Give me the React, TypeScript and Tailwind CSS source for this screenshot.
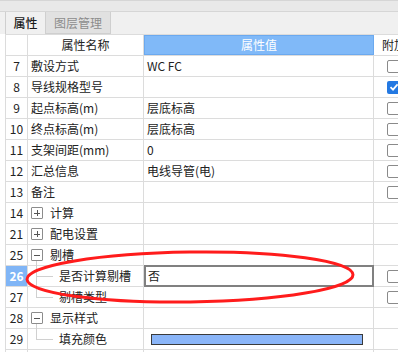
import React from "react";

type Row = {
  no: string;
  name: string;
  value?: string;
  check?: boolean | null; // null = no checkbox
  expand?: "+" | "-";
  child?: "mid" | "last";
  selected?: boolean;
  color?: boolean;
};

const rows: Row[] = [
  { no: "7", name: "敷设方式", value: "WC FC", check: false },
  { no: "8", name: "导线规格型号", check: true },
  { no: "9", name: "起点标高(m)", value: "层底标高", check: false },
  { no: "10", name: "终点标高(m)", value: "层底标高", check: false },
  { no: "11", name: "支架间距(mm)", value: "0", check: false },
  { no: "12", name: "汇总信息", value: "电线导管(电)", check: false },
  { no: "13", name: "备注", check: false },
  { no: "14", name: "计算", expand: "+", check: null },
  { no: "21", name: "配电设置", expand: "+", check: null },
  { no: "25", name: "剔槽", expand: "-", check: null },
  { no: "26", name: "是否计算剔槽", value: "否", child: "mid", selected: true, check: false },
  { no: "27", name: "剔槽类型", child: "last", check: false },
  { no: "28", name: "显示样式", expand: "-", check: null },
  { no: "29", name: "填充颜色", child: "last", color: true, check: null },
];

function CheckBox({ checked }: { checked: boolean }) {
  if (checked) {
    return (
      <span className="flex h-[13px] w-[13px] shrink-0 items-center justify-center rounded-[2px] bg-[#2479e2]">
        <svg width="10" height="10" viewBox="0 0 10 10">
          <path d="M1.5 5.2 L4 7.6 L8.6 2.4" fill="none" stroke="#fff" strokeWidth="1.8" />
        </svg>
      </span>
    );
  }
  return <span className="h-[13px] w-[13px] shrink-0 rounded-[2px] border border-[#8a8a8a] bg-white" />;
}

function ExpandBox({ sign }: { sign: "+" | "-" }) {
  return (
    <span className="relative flex h-[12px] w-[12px] shrink-0 items-center justify-center rounded-[1px] border border-[#8c8c8c] bg-white">
      <span className="absolute h-px w-[6px] bg-[#555]" />
      {sign === "+" && <span className="absolute h-[6px] w-px bg-[#555]" />}
    </span>
  );
}

export default function App() {
  return (
    <div
      className="relative h-[352px] w-[398px] overflow-hidden bg-white text-[12px] text-[#222]"
      style={{ fontFamily: '"Noto Sans CJK SC", "Noto Sans", sans-serif' }}
    >
      {/* top strip */}
      <div className="h-[12px] border-y border-[#d6d6d6] bg-[#e9e9e9]" />

      {/* tabs */}
      <div className="flex h-[22px] bg-[#f0f0f0] pl-[5px]">
        <div className="flex w-[41px] items-center justify-center border-x border-[#cfcfcf] font-medium text-[#1a1a1a]">
          属性
        </div>
        <div className="flex w-[65px] items-center justify-center border-r border-b border-[#cfcfcf] bg-[#e1e1e1] text-[#8c8c8c]">
          图层管理
        </div>
      </div>

      {/* table */}
      <div className="pl-[5px]">
        <div className="flex h-[22px] border-y border-[#dcdcdc]">
          <div className="w-[23px] shrink-0 border-x border-[#dcdcdc]" />
          <div className="flex w-[116px] shrink-0 items-center justify-center border-r border-[#dcdcdc]">属性名称</div>
          <div className="flex w-[230px] shrink-0 items-center justify-center border border-[#6ba9ef] bg-[#80b9f8] text-white">
            属性值
          </div>
          <div className="flex items-center pl-[8px] whitespace-nowrap">附加</div>
        </div>

        {rows.map((r) => (
          <div key={r.no} className="flex h-[21px] border-b border-[#dcdcdc]">
            <div
              className={
                r.selected
                  ? "flex w-[23px] shrink-0 items-center justify-center border-x border-[#dcdcdc] bg-[#80b5f6] font-bold text-white"
                  : "flex w-[23px] shrink-0 items-center justify-center border-x border-[#dcdcdc]"
              }
            >
              {r.no}
            </div>
            <div className="relative flex w-[116px] shrink-0 items-center border-r border-[#dcdcdc] whitespace-nowrap">
              {r.expand && (
                <>
                  <span className="ml-[3px]">
                    <ExpandBox sign={r.expand} />
                  </span>
                  <span className="ml-[7px]">{r.name}</span>
                  {r.expand === "-" && <span className="absolute left-[8px] top-[16px] h-[5px] w-px bg-[#d0d0d0]" />}
                </>
              )}
              {r.child && (
                <>
                  <span
                    className={
                      r.child === "mid"
                        ? "absolute left-[8px] top-0 h-full w-px bg-[#d0d0d0]"
                        : "absolute left-[8px] top-0 h-[10px] w-px bg-[#d0d0d0]"
                    }
                  />
                  <span className="absolute left-[8px] top-[10px] h-px w-[17px] bg-[#d0d0d0]" />
                  <span className="ml-[31px]">{r.name}</span>
                </>
              )}
              {!r.expand && !r.child && <span className="ml-[3px]">{r.name}</span>}
            </div>
            <div
              className={
                r.selected
                  ? "flex w-[230px] shrink-0 items-center border-2 border-[#808080] pl-[2px] -my-px"
                  : "flex w-[230px] shrink-0 items-center border-r border-[#dcdcdc] pl-[3px] whitespace-nowrap"
              }
            >
              {r.value}
              {r.color && <span className="ml-[4px] h-[11px] w-[212px] border border-[#3a3a3a] bg-[#8ab5f8]" />}
            </div>
            <div className="flex items-center pl-[13px]">
              {r.check !== null && r.check !== undefined && <CheckBox checked={r.check} />}
            </div>
          </div>
        ))}
        <div className="flex h-[21px]">
          <div className="w-[23px] shrink-0 border-x border-[#dcdcdc]" />
          <div className="w-[116px] shrink-0 border-r border-[#dcdcdc]" />
          <div className="w-[230px] shrink-0 border-r border-[#dcdcdc]" />
        </div>
      </div>

      {/* red annotation ellipse */}
      <svg className="pointer-events-none absolute left-0 top-0" width="398" height="352">
        <ellipse
          cx="190"
          cy="277"
          rx="163"
          ry="25"
          transform="rotate(-0.8 190 277)"
          fill="none"
          stroke="#ff1c1c"
          strokeWidth="3"
        />
      </svg>
    </div>
  );
}
